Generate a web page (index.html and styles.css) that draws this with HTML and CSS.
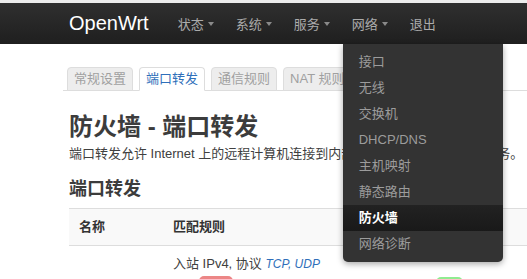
FILE: index.html
```html
<!DOCTYPE html>
<html lang="zh-CN">
<head>
<meta charset="utf-8">
<title>防火墙 - 端口转发</title>
<link rel="stylesheet" href="styles.css">
</head>
<body>
<div class="topstrip"></div>
<header class="topbar">
  <div class="container bar-inner">
    <a class="brand" href="#">OpenWrt</a>
    <ul class="nav">
      <li><a href="#">状态<span class="caret"></span></a></li>
      <li><a href="#">系统<span class="caret"></span></a></li>
      <li><a href="#">服务<span class="caret"></span></a></li>
      <li class="open"><a href="#">网络<span class="caret"></span></a>
        <ul class="dropdown">
          <li><a href="#">接口</a></li>
          <li><a href="#">无线</a></li>
          <li><a href="#">交换机</a></li>
          <li><a href="#">DHCP/DNS</a></li>
          <li><a href="#">主机映射</a></li>
          <li><a href="#">静态路由</a></li>
          <li class="active"><a href="#">防火墙</a></li>
          <li><a href="#">网络诊断</a></li>
        </ul>
      </li>
      <li><a href="#">退出</a></li>
    </ul>
  </div>
</header>
<main class="container">
  <ul class="tabs">
    <li><a href="#">常规设置</a></li>
    <li class="active"><a href="#">端口转发</a></li>
    <li><a href="#">通信规则</a></li>
    <li><a href="#">NAT 规则</a></li>
  </ul>
  <h2 class="title">防火墙 - 端口转发</h2>
  <p class="desc">端口转发允许 Internet 上的远程计算机连接到内部网络中的特定计算机或服务。</p>
  <h3 class="subtitle">端口转发</h3>
  <table class="table">
    <thead>
      <tr>
        <th class="c-name">名称</th>
        <th class="c-match">匹配规则</th>
        <th class="c-action">转发到</th>
      </tr>
    </thead>
    <tbody>
      <tr>
        <td class="c-name"></td>
        <td class="c-match">
          <div class="line">入站 IPv4, 协议 <em class="proto">TCP, UDP</em></div>
          <div class="line line2">来自<span class="zone zone-wan">wan</span></div>
        </td>
        <td class="c-action">
          <div class="line">&nbsp;</div>
          <div class="line line2 lan-line"><span class="zone zone-lan">lan</span></div>
        </td>
      </tr>
    </tbody>
  </table>
</main>
</body>
</html>
```

FILE: styles.css
```css
html, body {
  margin: 0;
  padding: 0;
  overflow: hidden;
  background: #fff;
}

body {
  width: 527px;
  height: 279px;
  font-family: "Liberation Sans", "Noto Sans CJK SC", sans-serif;
  font-size: 13px;
  color: #404040;
}

.topstrip {
  height: 3px;
  background: #ececec;
}

.topbar {
  height: 41px;
  background: linear-gradient(#2f2f2f, #1f1f1f);
}

.container {
  width: 900px;
  margin-left: 69px;
}

.bar-inner {
  display: flex;
  height: 41px;
}

.brand {
  font-size: 20px;
  line-height: 41px;
  color: #fff;
  text-decoration: none;
  margin-right: 18px;
}

.nav {
  display: flex;
  list-style: none;
  margin: 0;
  padding: 0;
}

.nav > li {
  position: relative;
}

.nav > li > a {
  display: flex;
  align-items: center;
  height: 41px;
  padding: 0 11px;
  color: #ababab;
  font-size: 13px;
  text-decoration: none;
}

.caret {
  width: 0;
  height: 0;
  border-top: 4px solid #8a8a8a;
  border-left: 3px solid transparent;
  border-right: 3px solid transparent;
  margin-left: 4px;
  margin-top: 1px;
}

.dropdown {
  position: absolute;
  top: 100%;
  left: 2px;
  width: 160px;
  margin: 0;
  padding: 5px 0;
  list-style: none;
  background: #333;
  border-radius: 0 0 5px 5px;
  box-shadow: 0 2px 6px rgba(0, 0, 0, 0.35);
  z-index: 10;
}

.dropdown a {
  display: block;
  padding: 0 16px;
  line-height: 26px;
  font-size: 13px;
  color: #9c9c9c;
  text-decoration: none;
  white-space: nowrap;
}

.dropdown .active a {
  background: linear-gradient(#222, #191919);
  color: #fff;
  font-weight: bold;
}

.tabs {
  display: flex;
  list-style: none;
  margin: 23px 0 0 -6px;
  padding: 0 0 0 4px;
  border-bottom: 1px solid #ddd;
}

.tabs li {
  margin-right: 6px;
  margin-bottom: -1px;
}

.tabs a {
  display: block;
  height: 22px;
  line-height: 22px;
  padding: 0 6px;
  border: 1px solid #ddd;
  border-radius: 4px 4px 0 0;
  background: #ededed;
  color: #a0a0a0;
  font-size: 13px;
  text-decoration: none;
  white-space: nowrap;
}

.tabs .active a {
  background: #fff;
  border-bottom-color: #fff;
  color: #2f6fba;
}

.title {
  margin: 22px 0 0;
  font-size: 24px;
  line-height: 28px;
  font-weight: bold;
  color: #3c3c3c;
}

.desc {
  margin: 4px 0 0;
  line-height: 18px;
  white-space: nowrap;
}

.subtitle {
  margin: 14px 0 0;
  font-size: 18px;
  line-height: 24px;
  font-weight: bold;
  color: #3c3c3c;
}

.table {
  margin-top: 7px;
  border-collapse: collapse;
  width: 760px;
}

.table th {
  height: 36px;
  padding: 0 10px;
  line-height: 36px;
  text-align: left;
  font-weight: bold;
  color: #333;
  background: #f9f9f9;
  border-top: 1px solid #ddd;
  border-bottom: 1px solid #ddd;
}

.table td {
  padding: 8px 10px;
  line-height: 20px;
  vertical-align: top;
  white-space: nowrap;
}

.line2 {
  margin-top: 1px;
  line-height: 24px;
}

.lan-line {
  margin-top: 2px;
}

.c-name {
  width: 74px;
}

.c-match {
  width: 243px;
}

.proto {
  font-size: 12px;
  color: #2f6fba;
}

.zone {
  display: inline-block;
  padding: 0 5px;
  line-height: 24px;
  border-radius: 5px;
  vertical-align: middle;
  color: #333;
}

.zone-wan {
  background: #ec8686;
}

.zone-lan {
  background: #90ec90;
}
```
